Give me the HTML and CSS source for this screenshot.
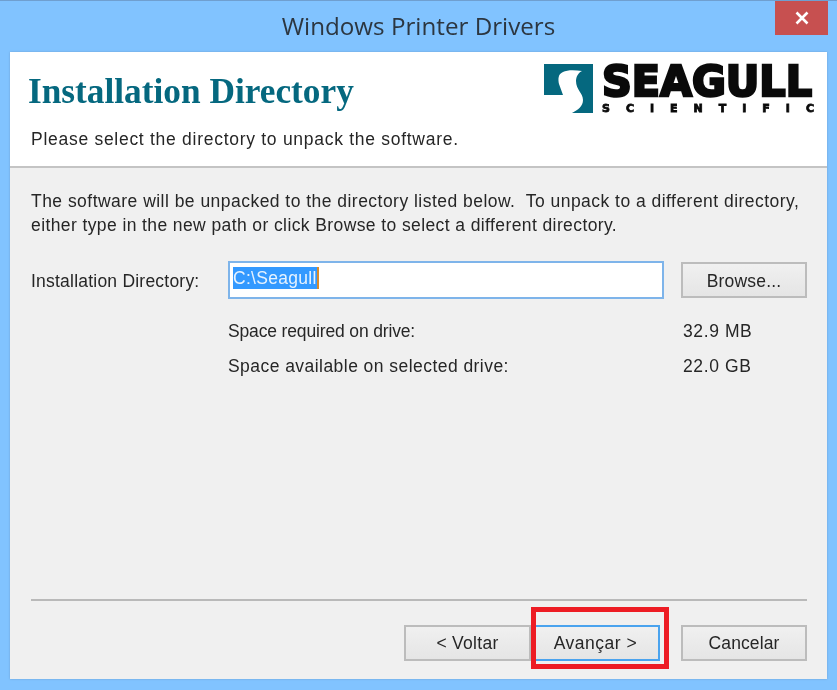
FILE: index.html
```html
<!DOCTYPE html>
<html lang="en">
<head>
<meta charset="utf-8">
<title>Windows Printer Drivers</title>
<link rel="stylesheet" href="styles.css">
</head>
<body>
<div class="window">
  <div class="titlebar">
    <span class="title">Windows Printer Drivers</span>
    <div class="close">
      <svg width="14" height="14" viewBox="0 0 14 14"><path d="M1.5 1.5 12.5 12.5M12.5 1.5 1.5 12.5" stroke="#fff" stroke-width="2.6" fill="none"/></svg>
    </div>
  </div>
  <div class="content">
    <header class="head">
      <div class="head-text">
        <h1>Installation Directory</h1>
        <p>Please select the directory to unpack the software.</p>
      </div>
      <svg class="logo" width="274" height="64" viewBox="0 -10 274 64">
        <path fill="#05687f" d="M0 1H49V50H28C34 47 39 43 39 37C39 30 32 27 32 18C32 14 34 10 38 8C30 7 23 7 19 9C14 11 14 16 15 21L19 32H0Z"/>
        <text x="58" y="33" class="logo-big" textLength="210" lengthAdjust="spacingAndGlyphs">SEAGULL</text>
        <text x="58" y="49" class="logo-small" textLength="212">SCIENTIFIC</text>
      </svg>
    </header>
    <main class="body">
      <p class="intro"><span class="line-1">The software will be unpacked to the directory listed below.  To unpack to a different directory,</span><br><span class="line-2">either type in the new path or click Browse to select a different directory.</span></p>
      <div class="dir-row">
        <label class="dir-label" for="dir">Installation Directory:</label>
        <div class="dir-input" id="dir"><span class="selected">C:\Seagull</span></div>
        <button class="btn browse">Browse...</button>
      </div>
      <div class="space-row"><span class="space-name name-req">Space required on drive:</span><span class="space-val">32.9 MB</span></div>
      <div class="space-row"><span class="space-name name-avail">Space available on selected drive:</span><span class="space-val">22.0 GB</span></div>
      <div class="spacer"></div>
      <hr class="rule">
      <div class="actions">
        <button class="btn back">&lt; Voltar</button>
        <button class="btn next">Avançar &gt;
          <span class="highlight"></span>
        </button>
        <button class="btn cancel">Cancelar</button>
      </div>
    </main>
  </div>
</div>
</body>
</html>
```
FILE: styles.css
```css
* { box-sizing: border-box; }
html, body { margin: 0; height: 100%; }
body { overflow: hidden; background: #81c3ff; }
.window {
  width: 837px;
  height: 690px;
  background: #81c3ff;
  border-top: 1px solid #6f9fd0;
  display: flex;
  flex-direction: column;
  padding: 0 10px 11px 10px;
  font-family: "Liberation Sans", Arial, sans-serif;
  color: #262626;
  filter: blur(0.6px);
}
.titlebar {
  height: 51px;
  position: relative;
  display: flex;
  align-items: center;
  justify-content: center;
  padding-bottom: 2px;
}
.title {
  font-family: "Open Sans", sans-serif;
  font-size: 24.2px;
  color: #2c3640;
}
.close {
  position: absolute;
  top: 0;
  right: -1px;
  width: 53px;
  height: 34px;
  background: #c75050;
  display: flex;
  align-items: center;
  justify-content: center;
}
.content {
  flex: 1;
  display: flex;
  flex-direction: column;
  background: #f0f0f0;
  min-height: 0;
  box-shadow: 0 0 2px #6f9fd0;
}
.head {
  height: 116px;
  background: #fff;
  border-bottom: 2px solid #c4c4c4;
  display: flex;
  justify-content: space-between;
  flex-shrink: 0;
}
.head-text { padding: 20px 0 0 18px; }
h1 {
  margin: 0;
  font-family: "Liberation Serif", serif;
  font-weight: bold;
  font-size: 35.3px;
  line-height: 40px;
  color: #05687f;
}
.head-text p {
  margin: 17px 0 0 3px;
  font-size: 17.5px;
  line-height: 20px;
  letter-spacing: 0.72px;
}
.logo { margin: 1px 9px 0 0; flex-shrink: 0; overflow: visible; }
.logo-big {
  font-family: "DejaVu Sans", sans-serif;
  font-weight: bold;
  font-size: 43px;
  fill: #0a0a0a;
  stroke: #0a0a0a;
  stroke-width: 2.6px;
}
.logo-small {
  font-family: "DejaVu Sans", sans-serif;
  font-weight: bold;
  font-size: 11px;
  fill: #0a0a0a;
  stroke: #0a0a0a;
  stroke-width: .8px;
}
.body {
  flex: 1;
  display: flex;
  flex-direction: column;
  padding: 21px 20px 18px 21px;
  font-size: 17.5px;
}
.intro { margin: 0; line-height: 24px; white-space: pre-wrap; }
.line-1 { letter-spacing: 0.47px; }
.line-2 { letter-spacing: 0.4px; }
.dir-row {
  display: flex;
  align-items: center;
  margin-top: 24px;
  margin-bottom: 15px;
  height: 38px;
}
.dir-label { width: 197px; letter-spacing: 0.22px; padding-top: 2px; }
.dir-input {
  width: 436px;
  height: 38px;
  background: #fff;
  border: 2px solid #7eb4ea;
  padding: 4px 3px;
  font-size: 17.5px;
}
.selected {
  display: inline-block;
  background: #3399ff;
  color: #e6f2ff;
  line-height: 22px;
  border-right: 2px solid #d98a2a;
  letter-spacing: 0.3px;
}
.btn {
  height: 36px;
  width: 126px;
  font: inherit;
  color: #262626;
  background: linear-gradient(#f0f0f0, #e5e5e5);
  border: 2px solid #bcbcbc;
  padding: 0;
  position: relative;
}
.browse { margin-left: 17px; padding-top: 2px; letter-spacing: 0.2px; }
.space-row {
  display: flex;
  padding-left: 197px;
  height: 35px;
  align-items: center;
}
.space-name { width: 455px; }
.name-req { letter-spacing: -0.15px; }
.name-avail { letter-spacing: 0.45px; }
.space-val { letter-spacing: 0.6px; }
.spacer { flex: 1; }
.rule {
  margin: 0 0 24px 0;
  border: 0;
  border-top: 2px solid #b9b9b9;
}
.actions { display: flex; justify-content: flex-end; }
.back { width: 127px; letter-spacing: 0.3px; }
.next { width: 129px; border-color: #4aa3ee; margin-right: 21px; letter-spacing: 0.5px; }
.cancel { letter-spacing: 0.1px; }
.highlight {
  position: absolute;
  left: -2px;
  top: -20px;
  width: 138px;
  height: 62px;
  border: 5px solid #ed1c24;
}
```
